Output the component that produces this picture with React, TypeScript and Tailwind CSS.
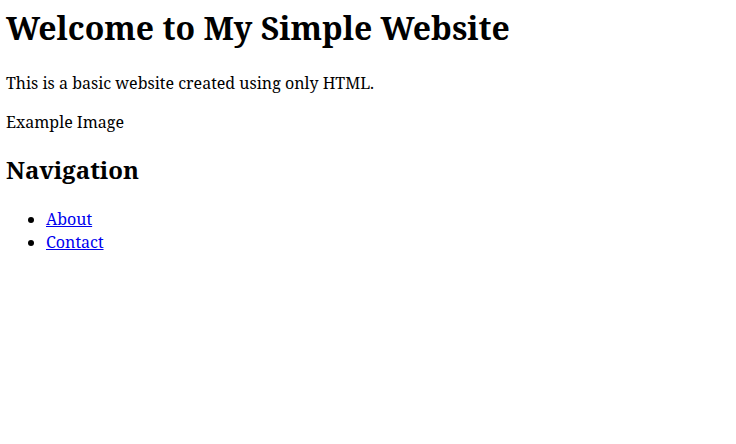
import React from 'react'

function App() {
  return (
    <div className="min-h-screen bg-white px-1.5 pt-1.5 font-['Noto_Serif',serif] text-black">
      <h1 className="text-[32px] font-bold leading-[44px]">Welcome to My Simple Website</h1>
      <p className="mt-[22px] text-base leading-[22px]">This is a basic website created using only HTML.</p>
      <p className="mt-[17px] text-base leading-[22px]">Example Image</p>
      <h2 className="mt-5 text-2xl font-bold leading-[33px]">Navigation</h2>
      <ul className="mt-[22px] list-disc pl-10 text-base leading-[22.7px]">
        <li>
          <a href="#about" className="text-[#0000ee] underline">About</a>
        </li>
        <li>
          <a href="#contact" className="text-[#0000ee] underline">Contact</a>
        </li>
      </ul>
    </div>
  )
}

export default App
